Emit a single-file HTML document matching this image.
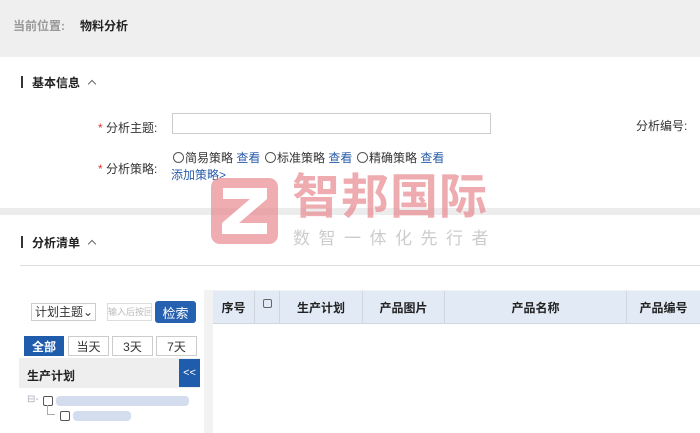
<!DOCTYPE html>
<html><head><meta charset="utf-8"><style>
*{margin:0;padding:0;box-sizing:border-box}
body{width:700px;height:433px;overflow:hidden;background:#fff;font-family:"Liberation Sans","Noto Sans CJK SC",sans-serif;font-size:12px;color:#333;position:relative}
.a{position:absolute}
.b{font-weight:bold}
.hd{background:#e2eaf5;border-right:1px solid #cfd6df;height:32px;top:291px;display:flex;align-items:center;justify-content:center;font-weight:bold;color:#222}
.tab{top:336px;height:20px;border:1px solid #ccc;display:flex;align-items:center;justify-content:center;font-size:12px;color:#333}
.r{display:inline-block;width:11px;height:11px;border:1px solid #555;border-radius:50%;vertical-align:-1px;margin-right:1px}
.ln{color:#2a5caa}
.chev{width:6px;height:6px;border-left:1.5px solid #666;border-top:1.5px solid #666;transform:rotate(45deg)}
</style></head><body>
<div class="a" style="left:0;top:0;width:700px;height:57px;background:#efefef"></div>
<div class="a" style="left:13px;top:17px;color:#999;font-weight:bold">当前位置:</div>
<div class="a b" style="left:80px;top:17px;color:#222">物料分析</div>

<div class="a" style="left:21px;top:76px;width:2px;height:12px;background:#333"></div>
<div class="a b" style="left:32px;top:74px;color:#222">基本信息</div>
<div class="a chev" style="left:89px;top:81px"></div>

<div class="a" style="left:98px;top:119px"><span style="color:#d33">*</span> 分析主题:</div>
<div class="a" style="left:172px;top:113px;width:319px;height:21px;border:1px solid #ccc"></div>
<div class="a" style="left:636px;top:117px">分析编号:</div>

<div class="a" style="left:98px;top:160px"><span style="color:#d33">*</span> 分析策略:</div>
<div class="a" style="left:173px;top:149px;white-space:nowrap"><span class="r"></span>简易策略 <span class="ln">查看</span></div>
<div class="a" style="left:265px;top:149px;white-space:nowrap"><span class="r"></span>标准策略 <span class="ln">查看</span></div>
<div class="a" style="left:357px;top:149px;white-space:nowrap"><span class="r"></span>精确策略 <span class="ln">查看</span></div>
<div class="a" style="left:171px;top:166px;color:#2a5caa">添加策略&gt;</div>

<div class="a" style="left:0;top:208px;width:700px;height:7px;background:#ececec"></div>

<div class="a" style="left:21px;top:236px;width:2px;height:12px;background:#333"></div>
<div class="a b" style="left:32px;top:234px;color:#222">分析清单</div>
<div class="a chev" style="left:89px;top:241px"></div>
<div class="a" style="left:20px;top:265px;width:680px;height:1px;background:#ddd"></div>

<div class="a" style="left:31px;top:303px;width:65px;height:18px;border:1px solid #ccc;font-size:12px;padding-left:3px;line-height:16px">计划主题⌄</div>
<div class="a" style="left:107px;top:303px;width:45px;height:18px;border:1px solid #ddd;font-size:9px;color:#bbb;line-height:16px;overflow:hidden;white-space:nowrap">输入后按回</div>
<div class="a" style="left:155px;top:301px;width:41px;height:22px;background:#2561b0;color:#fff;border-radius:3px;display:flex;align-items:center;justify-content:center;font-size:13px">检索</div>
<div class="a tab b" style="left:24px;width:40px;background:#1f5cac;color:#fff;border-color:#1f5cac">全部</div>
<div class="a tab" style="left:68px;width:41px">当天</div>
<div class="a tab" style="left:112px;width:41px">3天</div>
<div class="a tab" style="left:156px;width:41px">7天</div>
<div class="a" style="left:19px;top:358px;width:181px;height:30px;background:#eee"></div>
<div class="a b" style="left:27px;top:367px;color:#222">生产计划</div>
<div class="a" style="left:179px;top:359px;width:21px;height:28px;background:#1f5cac;color:#fff;display:flex;align-items:center;justify-content:center;font-size:11px">&lt;&lt;</div>
<div class="a" style="left:27px;top:394px;color:#aab;font-size:10px">⊟-</div>
<div class="a" style="left:43px;top:396px;width:10px;height:10px;border:1px solid #555;border-radius:2px"></div>
<div class="a" style="left:56px;top:396px;width:133px;height:10px;background:#c8d4ea;border-radius:4px;opacity:.8"></div>
<div class="a" style="left:47px;top:405px;width:8px;height:10px;border-left:1px solid #aaa;border-bottom:1px solid #aaa"></div>
<div class="a" style="left:60px;top:411px;width:10px;height:10px;border:1px solid #555;border-radius:2px"></div>
<div class="a" style="left:73px;top:411px;width:58px;height:10px;background:#c8d4ea;border-radius:4px;opacity:.8"></div>

<div class="a" style="left:204px;top:290px;width:496px;height:143px;background:#f2f2f2"></div>
<div class="a" style="left:213px;top:291px;width:487px;height:142px;background:#fff"></div>
<div class="a hd" style="left:213px;width:42px">序号</div>
<div class="a hd" style="left:255px;width:25px"><span style="width:9px;height:9px;border:1px solid #666;border-radius:2px;display:block;margin-top:-8px"></span></div>
<div class="a hd" style="left:280px;width:83px">生产计划</div>
<div class="a hd" style="left:363px;width:82px">产品图片</div>
<div class="a hd" style="left:445px;width:182px">产品名称</div>
<div class="a hd" style="left:627px;width:73px;border-right:none">产品编号</div>
<div class="a" style="left:213px;top:323px;width:487px;height:1px;background:#cfd6df"></div>

<svg class="a" style="left:211px;top:178px" width="67" height="66" viewBox="0 0 67 66"><rect width="67" height="66" rx="9" fill="#e88a90" opacity=".7"/><path d="M12 10H56V21L28 45H56V56H11V45L39 21H12Z" fill="#fff"/></svg>
<div class="a" style="left:292px;top:168px;font-size:48px;font-weight:bold;color:#e88a90;opacity:.7;letter-spacing:1px;white-space:nowrap;line-height:60px">智邦国际</div>
<div class="a" style="left:293px;top:224px;font-size:17px;color:#ccc;letter-spacing:8.5px;white-space:nowrap">数智一体化先行者</div>
</body></html>
